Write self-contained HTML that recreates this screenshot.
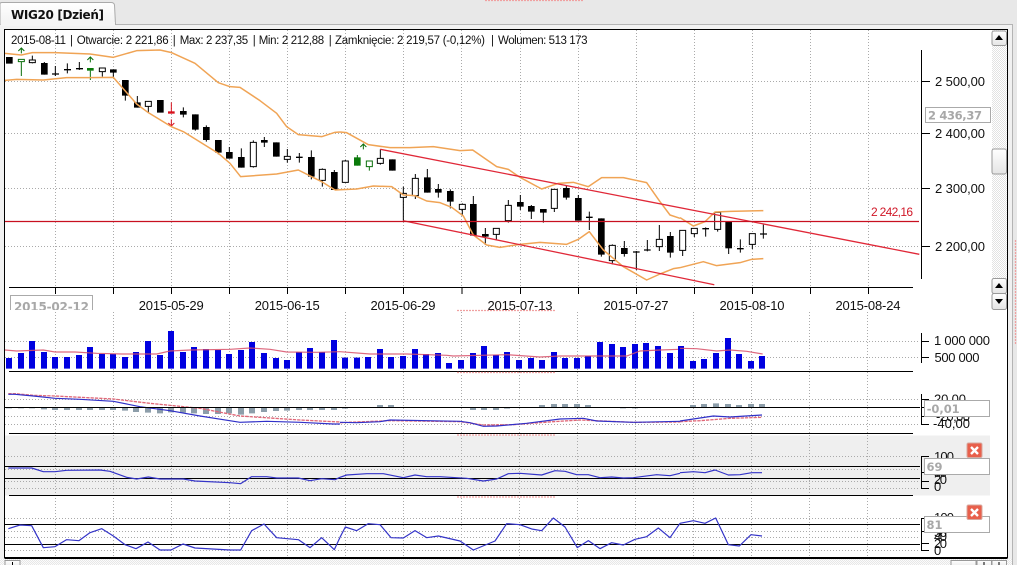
<!DOCTYPE html>
<html><head><meta charset="utf-8"><style>
html,body{margin:0;padding:0;background:#e8e8e8;overflow:hidden}
svg{display:block}
text{font-family:"Liberation Sans",sans-serif;font-size:13px;fill:#111}
.b{font-family:"DejaVu Sans",sans-serif;font-weight:bold;fill:#a8a8a8;font-size:12px}
</style></head><body>
<svg xmlns="http://www.w3.org/2000/svg" width="1017" height="565" viewBox="0 0 1017 565">
<defs>
<pattern id="ch" width="2" height="2" patternUnits="userSpaceOnUse"><rect width="2" height="2" fill="#fff"/><rect width="1" height="1" fill="#e2e2e2"/><rect x="1" y="1" width="1" height="1" fill="#e2e2e2"/></pattern>
<linearGradient id="g" x1="0" y1="0" x2="0" y2="1"><stop offset="0" stop-color="#fff"/><stop offset="1" stop-color="#e4e4e4"/></linearGradient>
<linearGradient id="tb" x1="0" y1="0" x2="0" y2="1"><stop offset="0" stop-color="#fff"/><stop offset="1" stop-color="#f2f2f2"/></linearGradient>
<clipPath id="dc"><rect x="9" y="295" width="85" height="15"/></clipPath>
</defs>
<rect width="1017" height="565" fill="#e8e8e8"/>
<rect x="0" y="24" width="1012" height="541" fill="#f1f1f1"/>
<path d="M0 24.5H1012.5V565" fill="none" stroke="#b4b4b4"/>
<path d="M0 24.5V4Q0 2.5 2 2.5H111Q114 2.5 114.5 5L115.5 24.5" fill="url(#tb)" stroke="#aaa"/>
<rect x="1" y="22" width="114" height="4" fill="#f4f4f4"/>
<text class="b" x="11" y="19" textLength="93" lengthAdjust="spacing" style="fill:#111">WIG20 [Dzień]</text>
<rect x="4.5" y="29.5" width="1003" height="528" fill="#fff"/>
<rect x="5" y="435.5" width="985" height="60" fill="#efefef"/>
<rect x="992" y="30" width="15" height="280" fill="url(#ch)"/>
<!-- grid -->
<g fill="none" stroke="#aaa" stroke-dasharray="1 2">
<path d="M55.5 30V287M113.5 30V287M171.5 30V287M229.5 30V287M287.5 30V287M345.5 30V287M403.5 30V287M461.5 30V287M520.5 30V287M578.5 30V287M636.5 30V287M694.5 30V287M752.5 30V287M810.5 30V287M868.5 30V287"/>
<path d="M55.5 312V558M113.5 312V558M171.5 312V558M229.5 312V558M287.5 312V558M345.5 312V558M403.5 312V558M461.5 312V558M519.5 312V558M577.5 312V558M635.5 312V558M693.5 312V558M751.5 312V558M809.5 312V558M867.5 312V558"/>
<path d="M5 81.5H918M5 133.5H918M5 188.5H918M5 246.5H918M5 341.5H918M5 357.5H918M5 399.5H918M5 416.5H918M5 424.5H918M5 456.5H918M5 469.5H918M5 481.5H918M5 488.5H918M5 518.5H918M5 531.5H918M5 537.5H918M5 550.5H918"/>
</g>
<!-- volume bars -->
<g transform="translate(0,290) scale(.33333)" fill="none">
<path stroke="#0000e0" stroke-width="18" d="M27 204V236M63 189V236M96 153V236M132 186V236M165 201V236M201 201V236M237 195V236M270 171V236M306 192V236M339 192V236M375 201V236M408 186V236M444 153V236M480 195V236M513 123V236M549 186V236M582 171V236M618 177V236M654 180V236M687 192V236M723 180V236M756 156V236M792 189V236M828 204V236M861 210V236M897 186V236M930 174V236M966 186V236M1002 150V236"/>
<path stroke="#d85068" stroke-width="3.500" opacity=".85" d="M15 180L50 183L130 180L165 186L225 186L290 190L365 192L470 192L510 183L570 180L690 178L750 174L810 178L860 186L950 187L1020 185"/>
<g stroke="#8d9eaa" stroke-width="18"><path d="M27 352V355M63 352V355M96 352V355M132 352V358M165 352V360M201 352V360M237 352V360M270 352V360M306 352V360M339 352V360M375 352V362M408 352V366M444 352V368M480 352V370M513 352V367M549 352V368M582 352V370M618 352V372M654 352V372M687 352V370M723 352V374M756 352V370M792 352V366M828 352V363M861 352V362M897 352V360M930 352V360M966 352V360M1002 352V360"/></g>
<path stroke="#e06878" stroke-width="4" stroke-dasharray="10 3" d="M25 311L45 311L100 316L165 318L340 327L450 340L600 355L720 378L900 390L1020 396"/>
<path stroke="#3030c8" stroke-width="3.500" d="M25 313L45 313L100 318L165 325L240 328L340 334L420 350L510 362L600 378L720 397L800 394L900 397L1000 402L1020 402"/>
</g>
<g transform="translate(340,290) scale(.33333)" fill="none">
<path stroke="#0000e0" stroke-width="18" d="M15 203V236M51 203V236M84 201V236M120 177V236M153 201V236M189 198V236M225 177V236M258 192V236M294 189V236M327 219V236M363 210V236M399 189V236M432 168V236M468 195V236M501 186V236M537 210V236M573 204V236M606 210V236M642 186V236M675 204V236M711 204V236M744 198V236M780 156V236M816 162V236M849 171V236M885 162V236M918 159V236M954 168V236M990 189V236"/>
<path stroke="#d85068" stroke-width="3.500" opacity=".85" d="M0 185L90 192L200 192L320 196L340 198L500 194L600 201L660 198L860 198L900 183L960 180L1020 178"/>
<path stroke="#8d9eaa" stroke-width="18" d="M15 352V356M120 345V352M153 345V352M399 352V360M432 352V360M468 352V360M501 352V356M606 345V352M642 342V352M675 342V352M711 342V352M744 345V352M849 352V355M885 352V355"/>
<path stroke="#e06878" stroke-width="4" stroke-dasharray="10 3" d="M0 398L150 392L360 395L430 405L520 404L640 395L720 390L880 397L1020 396"/>
<path stroke="#3030c8" stroke-width="3.500" d="M0 397L50 398L120 395L150 390L360 394L390 398L430 409L470 408L560 400L660 387L730 385L770 393L880 397L1020 394"/>
</g>
<g transform="translate(680,290) scale(.33333)" fill="none">
<path stroke="#0000e0" stroke-width="18" d="M3 168V236M39 213V236M72 207V236M108 189V236M144 144V236M177 192V236M213 213V236M246 198V236"/>
<path stroke="#d85068" stroke-width="3.500" opacity=".85" d="M0 175L50 176L110 183L150 180L200 184L248 192"/>
<path stroke="#8d9eaa" stroke-width="18" d="M39 345V352M72 342V352M108 340V352M144 342V352M177 345V352M213 342V352M246 342V352"/>
<path stroke="#e06878" stroke-width="4" stroke-dasharray="10 3" d="M0 395L60 392L150 385L246 382"/>
<path stroke="#3030c8" stroke-width="3.500" d="M0 393L100 378L150 381L246 375"/>
</g>
<!-- candles -->
<g transform="scale(.33333)" fill="none">
<path stroke="#000" stroke-width="3" d="M97 167V190M133 186V224M166 198V228M202 190V220M238 186V210M307 204V230M340 208V233M376 240V302M412 288V323M445 304V338M550 322V352M586 343V392M619 376V425M655 420V463M688 441V476M724 445V503M760 421V503M793 411V441M898 459V488M862 447V488M934 451V538M967 505V560M829 427V470M1003 510V570"/>
<path stroke="#000" stroke-width="4" d="M156 222H177M192 209H213M228 206H249M888 472H908"/>
<path stroke="#000" stroke-width="20" d="M28 171V191M133 189V224M340 208V218M376 240V287M412 307V323M481 300V338M550 333V344M586 343V389M619 381V420M655 420V458M688 456V476M724 471V503M793 420V428M829 427V470M934 471V530M1003 516V570"/>
<path stroke="#000" stroke-width="3" fill="#fff" d="M88 180h18V188h-18zM298 204h18V215h-18zM436 304h18V319h-18zM751 427h18V500h-18zM853 469h18V478h-18zM958 508h18V541h-18z"/>
<path stroke="#0a6e0a" stroke-width="3" fill="#fff" d="M64 185V228M55 178h18V185h-18zM64 160V144M55 153L64 144L73 153"/>
<path stroke="#0a6e0a" stroke-width="3" d="M271 212V240M271 187V171M262 180L271 171L280 180"/>
<path fill="#0a7a0a" d="M261 204h20v8h-20z"/>
<path stroke="#d8101c" stroke-width="3" d="M514 307V341M514 358V378M505 369L514 378L523 369"/>
<path fill="#d8101c" d="M504 334h20v7h-20z"/>
</g>
<g transform="translate(340,130) scale(.33333)" fill="none">
<path stroke="#000" stroke-width="3" d="M16 90V157M121 58V104M157 88V122M190 170V272M226 132V207M262 117V188M295 162V203M331 178V235M367 220V258M400 198V317M436 294V345M469 295V331M505 210V278M541 195V240M574 225V267M610 237V278M643 178V246M679 167V209M715 195V272M748 245V300M784 265V380M817 343V403M853 333V380M889 363V420M922 330V364M958 285V363M991 306V383"/>
<path stroke="#000" stroke-width="4" d="M738 262H758M879 366H899M912 360H932"/>
<path stroke="#000" stroke-width="20" d="M157 88V122M262 142V188M295 177V188M331 183V215M400 222V317M436 312V320M541 216V230M574 228V245M610 237V248M679 174V203M715 204V272M784 265V374M853 354V372M991 318V368"/>
<path stroke="#000" stroke-width="3" fill="#fff" d="M7 93h18V157h-18zM112 85h18V100h-18zM181 190h18V202h-18zM217 145h18V197h-18zM358 223h18V238h-18zM460 295h18V313h-18zM496 226h18V272h-18zM634 178h18V235h-18zM808 346h18V392h-18zM949 328h18V350h-18z"/>
<path stroke="#0a6e0a" stroke-width="3" d="M52 75V107M88 110V122M70 58V42M61 51L70 42L79 51"/>
<path fill="#0a7a0a" d="M42 82h20v25h-20z"/>
<path stroke="#0a6e0a" stroke-width="3" fill="#fff" d="M79 93h18V110h-18z"/>
</g>
<g transform="translate(680,130) scale(.33333)" fill="none">
<path stroke="#000" stroke-width="3" d="M8 361V378M43 295V321M77 292V320M113 245V305M146 276V372M181 328V368M217 311V357M250 284V326"/>
<path stroke="#000" stroke-width="4" d="M67 296H87M171 356H191M240 312H261"/>
<path stroke="#000" stroke-width="20" d="M146 276V355"/>
<path stroke="#000" stroke-width="3" fill="#fff" d="M-1 301h18V361h-18zM34 295h18V311h-18zM104 247h18V298h-18zM208 311h18V343h-18z"/>
</g>
<!-- bands -->
<g fill="none" stroke="#f0a455" stroke-linejoin="round">
<path transform="scale(.33333)" stroke-width="4.500" d="M15 160L64 165L97 158L165 158L270 162L340 172L410 152L480 150L515 158L585 190L655 248L690 260L720 262L780 302L830 340L860 380L895 404L965 410L1005 397L1020 396"/>
<path transform="scale(.33333)" stroke-width="4.500" d="M15 241L50 238L130 240L200 233L270 233L340 232L410 312L445 338L514 380L550 395L655 460L690 490L722 530L830 522L895 510L965 545L1005 570"/>
<path transform="translate(340,130) scale(.33333)" stroke-width="4.500" d="M0 6L20 8L85 44L150 53L210 53L280 50L360 62L398 60L470 110L505 118L540 142L605 177L655 160L700 157L745 170L785 143L850 143L920 158L960 215L990 255L1020 265"/>
<path transform="translate(340,130) scale(.33333)" stroke-width="4.500" d="M-15 180L50 177L100 168L155 170L190 195L225 197L260 213L300 218L335 232L370 258L400 315L440 345L480 352L540 343L600 337L680 343L715 328L748 305L790 360L850 410L920 450L960 432L1000 416L1020 413"/>
<path transform="translate(680,130) scale(.33333)" stroke-width="4.500" d="M0 263L40 288L75 275L105 246L150 244L250 242"/>
<path transform="translate(680,130) scale(.33333)" stroke-width="4.500" d="M0 413L70 395L110 407L180 398L215 388L250 386"/>
</g>
<!-- trend lines -->
<g fill="none" stroke="#e02838" stroke-width="1.300">
<path d="M380.3 149.3L919.3 254.3"/><path d="M403.3 220.7L714.3 284.7"/>
</g>
<path d="M5 221.500H919" stroke="#c81020" stroke-width="1.300"/>
<text x="871" y="216" style="fill:#d01828;font-size:12px" textLength="42" lengthAdjust="spacing">2 242,16</text>
<!-- header -->
<g style="fill:#222">
<text x="11" y="44" textLength="55" lengthAdjust="spacing" style="font-size:11.500px">2015-08-11</text>
<text x="70" y="44" style="font-size:11.500px">|</text>
<text x="76.7" y="44" textLength="92" lengthAdjust="spacing" style="font-size:11.500px">Otwarcie: 2 221,86</text>
<text x="172.7" y="44" style="font-size:11.500px">|</text>
<text x="179.7" y="44" textLength="68.5" lengthAdjust="spacing" style="font-size:11.500px">Max: 2 237,35</text>
<text x="252.7" y="44" style="font-size:11.500px">|</text>
<text x="258.7" y="44" textLength="65.5" lengthAdjust="spacing" style="font-size:11.500px">Min: 2 212,88</text>
<text x="328.7" y="44" style="font-size:11.500px">|</text>
<text x="335" y="44" textLength="150" lengthAdjust="spacing" style="font-size:11.500px">Zamknięcie: 2 219,57 (-0,12%)</text>
<text x="491" y="44" style="font-size:11.500px">|</text>
<text x="498" y="44" textLength="89.5" lengthAdjust="spacing" style="font-size:11.500px">Wolumen: 513 173</text>
</g>
<!-- axes -->
<g stroke="#000" fill="none">
<path d="M921.5 50V279M921 81.5H930M921 133.5H930M921 188.5H930M921 246.5H930"/>
<path d="M9 287.5H913M55.5 287V294M113.5 287V294M171.5 287V294M229.5 287V294M287.5 287V294M345.5 287V294M403.5 287V294M462 287V294M520.5 287V294M578.5 287V294M636.5 287V294M694.5 287V294M752.5 287V294M810.5 287V294M868.5 287V294"/>
<path d="M9 371.5H913M9 433.5H913M5 407.5H920M5 466.5H920M5 478.5H920M9 495.5H913M5 524.5H920M5 544.5H920"/>
<path d="M921.5 333V363M921 341.5H929M921 357.5H929"/>
<path d="M921.5 394V425M921 399.5H929M921 407.5H929M921 416.5H929M921 424.5H929"/>
<path d="M921.5 456V488M921 456.5H929M921 472.5H929M921 481.5H929M921 488.5H929"/>
<path d="M921.5 518V551M921 518.5H929M921 531.5H929M921 543.5H929M921 550.5H929"/>
</g>
<!-- stochastic lines -->
<g fill="none" stroke="#3434c8" stroke-width="3.600" stroke-linejoin="round">
<path transform="translate(0,430) scale(.33333)" d="M25 114L95 114L130 125L165 125L200 121L300 120L330 124L380 142L410 147L445 141L480 147L550 147L585 153L690 158L722 161L755 140L800 140L830 144L895 144L930 152L965 146L1005 149L1020 142"/>
<path transform="translate(340,430) scale(.33333)" d="M0 142L20 135L80 131L130 131L190 143L225 135L260 140L300 140L380 145L430 153L470 147L505 131L540 130L605 135L645 122L675 124L710 134L745 134L780 143L815 141L850 144L880 143L950 134L990 137L1020 130"/>
<path transform="translate(680,430) scale(.33333)" d="M0 128L40 125L75 128L105 120L145 135L180 134L215 128L246 128"/>
<path transform="translate(0,430) scale(.33333)" d="M25 296L60 285L95 287L130 353L165 350L200 329L237 332L270 308L305 296L340 318L375 344L408 356L444 336L480 360L513 360L549 342L585 354L690 360L722 360L755 302L792 282L830 323L895 329L930 353L965 323L1003 359L1020 322"/>
<path transform="translate(340,430) scale(.33333)" d="M0 322L16 291L50 302L85 281L120 284L153 323L190 324L225 302L260 323L295 318L360 333L400 360L465 333L500 281L540 284L575 297L605 302L640 264L675 291L712 353L745 332L780 356L815 338L850 345L885 328L920 320L955 294L990 323L1020 280"/>
<path transform="translate(680,430) scale(.33333)" d="M0 280L40 272L75 280L107 264L145 344L178 348L213 314L246 318"/>
</g>
<g>
<text x="935" y="86" textLength="50" lengthAdjust="spacing">2 500,00</text>
<text x="935" y="138" textLength="50" lengthAdjust="spacing">2 400,00</text>
<text x="935" y="193" textLength="50" lengthAdjust="spacing">2 300,00</text>
<text x="935" y="251" textLength="50" lengthAdjust="spacing">2 200,00</text>
<text x="138.7" y="310" textLength="65" lengthAdjust="spacing">2015-05-29</text>
<text x="254.7" y="310" textLength="65" lengthAdjust="spacing">2015-06-15</text>
<text x="370.5" y="310" textLength="65" lengthAdjust="spacing">2015-06-29</text>
<text x="487.5" y="310" textLength="65" lengthAdjust="spacing">2015-07-13</text>
<text x="603.5" y="310" textLength="65" lengthAdjust="spacing">2015-07-27</text>
<text x="719.5" y="310" textLength="65" lengthAdjust="spacing">2015-08-10</text>
<text x="835.5" y="310" textLength="65" lengthAdjust="spacing">2015-08-24</text>
<text x="934" y="345" textLength="56" lengthAdjust="spacing">1 000 000</text>
<text x="934.5" y="362" textLength="45" lengthAdjust="spacing">500 000</text>
<text x="934" y="403.500" textLength="32" lengthAdjust="spacing">20,00</text>
<text x="936" y="421" textLength="34" lengthAdjust="spacing">-20,00</text>
<text x="933" y="428" textLength="37" lengthAdjust="spacing">-40,00</text>
<text x="934" y="461" textLength="20" lengthAdjust="spacing">100</text>
<text x="934" y="477" textLength="13" lengthAdjust="spacing">50</text>
<text x="934" y="484" textLength="13" lengthAdjust="spacing">20</text>
<text x="934" y="491" textLength="6" lengthAdjust="spacing">0</text>
<text x="934" y="522" textLength="20" lengthAdjust="spacing">100</text>
<text x="934" y="537" textLength="13" lengthAdjust="spacing">50</text>
<text x="934" y="541" textLength="13" lengthAdjust="spacing">40</text>
<text x="934" y="548" textLength="13" lengthAdjust="spacing">20</text>
<text x="934" y="555" textLength="6" lengthAdjust="spacing">0</text>
</g>
<!-- value boxes -->
<g fill="#fff" stroke="#aaa">
<rect x="925.5" y="107.500" width="65" height="15"/>
<rect x="924.500" y="400.500" width="65" height="16"/>
<rect x="924.500" y="458.500" width="65" height="16"/>
<rect x="924.500" y="516.500" width="65" height="16"/>
</g>
<text class="b" x="928" y="119.500" textLength="54" lengthAdjust="spacing" style="font-size:11.500px">2 436,37</text>
<text class="b" x="926.700" y="413" textLength="33" lengthAdjust="spacing" style="font-size:11.500px">-0,01</text>
<text class="b" x="926.500" y="471" style="font-size:11.500px">69</text>
<text class="b" x="926.500" y="529" style="font-size:11.500px">81</text>
<!-- date box -->
<path d="M10.500 310V295.500H92.500V310" fill="#fff" stroke="#aaa"/>
<g clip-path="url(#dc)"><text class="b" x="14" y="311" textLength="75" lengthAdjust="spacing" style="font-size:12px">2015-02-12</text></g>
<!-- close buttons -->
<g>
<rect x="967" y="443" width="15" height="14.500" rx="1.500" fill="#e8604c" stroke="#d8a89e"/>
<path d="M971 447L978 454M978 447L971 454" stroke="#fff" stroke-width="2.400"/>
<rect x="967" y="505" width="15" height="14.500" rx="1.500" fill="#e8604c" stroke="#d8a89e"/>
<path d="M971 509L978 516M978 509L971 516" stroke="#fff" stroke-width="2.400"/>
</g>
<!-- scrollbar -->
<g stroke="#999" fill="url(#g)">
<rect x="992" y="31" width="14.500" height="14.500" rx="2"/>
<rect x="992" y="149" width="14.500" height="25" rx="2"/>
<rect x="992" y="278.500" width="14.500" height="15" rx="2"/>
<rect x="992" y="293.500" width="14.500" height="16" rx="2"/>
</g>
<path d="M999 35L1003 40H995zM999 283L1003 288H995zM995 299H1003L999 304z" fill="#000"/>
<!-- frame -->
<rect x="4.500" y="29.500" width="1003" height="528.500" fill="none" stroke="#000"/>
<path d="M5 558H1007" stroke="#000" stroke-width="2"/>
<rect x="0" y="559" width="1012" height="6" fill="url(#ch)" opacity=".7"/>
<g fill="url(#g)" stroke="#999">
<rect x="5" y="560.500" width="15" height="8"/>
<rect x="951" y="560.500" width="25" height="8"/>
<rect x="977" y="560.500" width="14.500" height="8"/>
<rect x="992" y="560.500" width="14.500" height="8"/>
</g>
<path d="M12.500 562V565M984 562V565M999 562V565" stroke="#000"/>
<!-- faint red marks -->
<g stroke="#f0a0a0" stroke-width="1.200" stroke-dasharray="2 1" fill="none">
<path d="M485 0.500H584M457 310.500H555M457 372.500H555M457 435H555M457 497H555"/>
<path d="M1015.500 240V345"/>
</g>
</svg>
</body></html>
